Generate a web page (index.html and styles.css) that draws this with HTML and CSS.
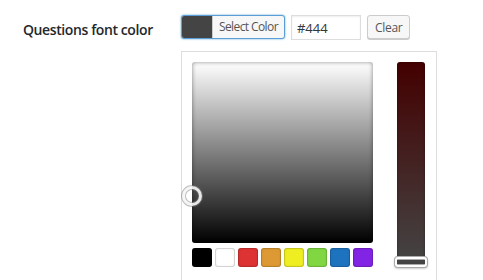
FILE: index.html
```html
<!DOCTYPE html>
<html lang="en">

<head>
    <meta charset="UTF-8">
    <meta name="viewport" content="width=device-width, initial-scale=1.0">
    <title>Questions font color</title>
    <link rel="stylesheet" href="styles.css">
</head>

<body>
    <div class="form-row">
        <div class="row-label">Questions font color</div>
        <div class="row-field">
            <div class="color-controls">
                <button class="color-result">
                    <span class="color-swatch"></span>
                    <span class="color-text">Select Color</span>
                </button>
                <input type="text" class="color-input" value="#444">
                <button class="clear-btn">Clear</button>
            </div>
            <div class="picker">
                <div class="picker-left">
                    <div class="square">
                        <span class="square-handle"></span>
                    </div>
                    <div class="palette">
                        <span class="swatch" style="background-color: #000;"></span>
                        <span class="swatch" style="background-color: #fff;"></span>
                        <span class="swatch" style="background-color: #dd3333;"></span>
                        <span class="swatch" style="background-color: #dd9933;"></span>
                        <span class="swatch" style="background-color: #eeee22;"></span>
                        <span class="swatch" style="background-color: #81d742;"></span>
                        <span class="swatch" style="background-color: #1e73be;"></span>
                        <span class="swatch" style="background-color: #8224e3;"></span>
                    </div>
                </div>
                <div class="strip">
                    <span class="strip-handle"></span>
                </div>
            </div>
        </div>
    </div>
</body>

</html>
```

FILE: styles.css
```css
body {
    margin: 0;
    background-color: #fff;
    font-family: "Open Sans", "Noto Sans", sans-serif;
    color: #23282d;
    overflow: hidden;
}

.form-row {
    display: flex;
    padding-top: 15px;
}

.row-label {
    width: 158px;
    padding-left: 23px;
    padding-top: 5px;
    font-size: 14px;
    font-weight: 600;
    letter-spacing: -0.4px;
    color: #23282d;
}

.color-controls {
    display: flex;
    align-items: flex-start;
}

.color-result {
    display: flex;
    height: 24px;
    padding: 0;
    margin: 0;
    border: 1px solid #5b9dd9;
    border-radius: 3px;
    background-color: #f7f7f7;
    box-shadow: 0 0 2px rgba(30, 140, 190, 0.8);
    cursor: pointer;
    overflow: hidden;
    font-family: inherit;
}

.color-swatch {
    width: 30px;
    height: 100%;
    background-color: #444;
}

.color-text {
    height: 100%;
    border-left: 1px solid #ccc;
    padding: 0 6px;
    font-size: 12px;
    letter-spacing: -0.6px;
    line-height: 22px;
    color: #555;
}

.color-input {
    box-sizing: border-box;
    width: 70px;
    height: 25px;
    margin: 0 0 0 6px;
    padding: 0 5px;
    border: 1px solid #ddd;
    box-shadow: inset 0 1px 2px rgba(0, 0, 0, 0.07);
    font-family: inherit;
    font-size: 13px;
    color: #32373c;
    outline: none;
}

.clear-btn {
    box-sizing: border-box;
    height: 24px;
    margin: 0 0 0 6px;
    padding: 0 7px;
    border: 1px solid #ccc;
    border-radius: 3px;
    background-color: #f7f7f7;
    box-shadow: 0 1px 0 #ccc;
    font-family: inherit;
    font-size: 12px;
    letter-spacing: -0.3px;
    color: #555;
    cursor: pointer;
}

.picker {
    display: flex;
    width: 234px;
    margin-top: 11px;
    padding: 10px 10px 20px 10px;
    border: 1px solid #ddd;
}

.picker-left {
    width: 181px;
}

.square {
    position: relative;
    height: 181px;
    border-radius: 3px;
    background: linear-gradient(#fff, #000);
    box-shadow: inset 0 0 4px rgba(0, 0, 0, 0.45);
}

.square-handle {
    position: absolute;
    left: -11px;
    top: 123px;
    width: 12px;
    height: 12px;
    border: 5px solid rgba(128, 128, 128, 0.5);
    border-radius: 50%;
}

.square-handle::after {
    content: "";
    position: absolute;
    top: -4px;
    right: -4px;
    bottom: -4px;
    left: -4px;
    border: 3px solid rgba(255, 255, 255, 0.85);
    border-radius: 50%;
}

.palette {
    display: flex;
    gap: 3px;
    margin-top: 5px;
}

.swatch {
    width: 20px;
    height: 19px;
    border-radius: 3px;
    box-shadow: inset 0 0 0 1px rgba(0, 0, 0, 0.12), inset 0 0 3px rgba(0, 0, 0, 0.15);
}

.strip {
    position: relative;
    width: 28px;
    height: 200px;
    margin-left: 24px;
    border-radius: 3px;
    background: linear-gradient(#440000, #444);
    box-shadow: inset 0 0 3px rgba(0, 0, 0, 0.35);
}

.strip-handle {
    position: absolute;
    left: -3px;
    right: -3px;
    bottom: -6px;
    height: 4px;
    border: 4px solid #aaa;
    border-width: 4px 3px;
    border-radius: 4px;
    background-color: #444;
    box-shadow: 0 1px 2px rgba(0, 0, 0, 0.2);
}

.strip-handle::before {
    content: "";
    position: absolute;
    top: -3px;
    right: -2px;
    bottom: -3px;
    left: -2px;
    border: 2px solid #fff;
    border-radius: 3px;
}
```
